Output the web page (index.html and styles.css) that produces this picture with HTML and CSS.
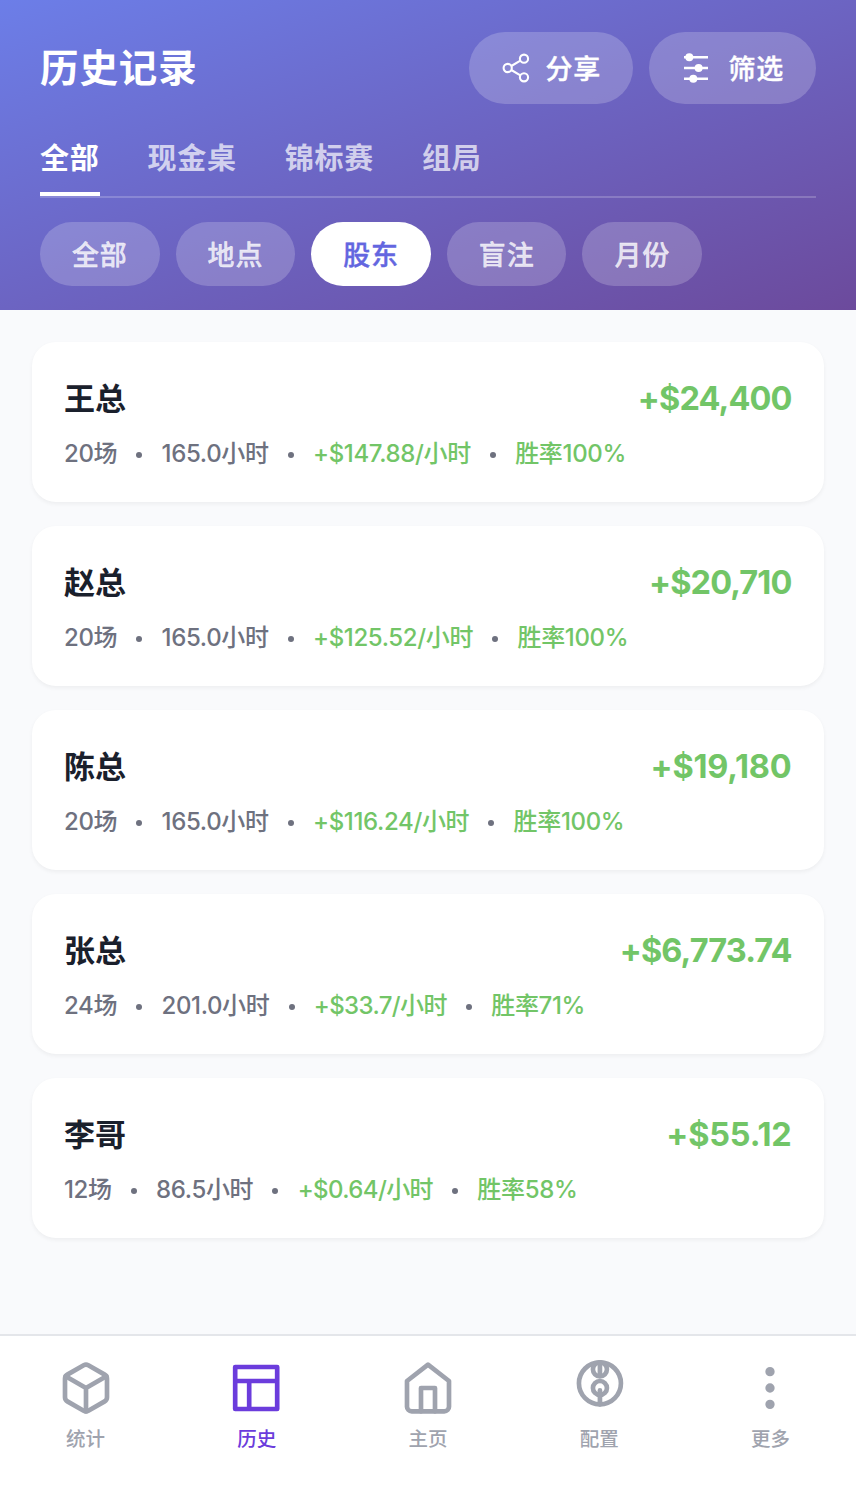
FILE: index.html
```
<!DOCTYPE html>
<html lang="zh-CN">
<head>
    <meta charset="UTF-8">
    <meta name="viewport" content="width=device-width, initial-scale=1.0">
    <title>历史记录</title>
    <link rel="stylesheet" href="styles.css">
</head>
<body>
    <header class="header">
        <div class="header__top">
            <h1 class="header__title">历史记录</h1>
            <div class="header__actions">
                <button class="action">
                    <svg class="action__icon action__icon--share" viewBox="0 0 32 32" fill="none" stroke="currentColor" stroke-width="2.1">
                        <circle cx="6.7" cy="16" r="4.1"/>
                        <circle cx="23" cy="6.7" r="4.1"/>
                        <circle cx="23" cy="25.3" r="4.1"/>
                        <path d="M10.3 14l9.1-5.3M10.3 18l9.1 5.3"/>
                    </svg>
                    <span>分享</span>
                </button>
                <button class="action">
                    <svg class="action__icon action__icon--filter" viewBox="0 0 32 32" fill="currentColor" stroke="currentColor" stroke-width="2.4">
                        <path d="M3 5.3h24M3 16h24M3 26.7h24"/>
                        <g stroke="none">
                            <circle cx="8.3" cy="5.3" r="4"/>
                            <circle cx="17.6" cy="16" r="4"/>
                            <circle cx="12.3" cy="26.7" r="4"/>
                        </g>
                    </svg>
                    <span>筛选</span>
                </button>
            </div>
        </div>
        <nav class="tabs">
            <a class="tab tab--active">全部</a>
            <a class="tab">现金桌</a>
            <a class="tab">锦标赛</a>
            <a class="tab">组局</a>
        </nav>
        <div class="chips">
            <button class="chip">全部</button>
            <button class="chip">地点</button>
            <button class="chip chip--active">股东</button>
            <button class="chip">盲注</button>
            <button class="chip">月份</button>
        </div>
    </header>

    <main class="list">
        <article class="card">
            <div class="card__row">
                <h2 class="card__name">王总</h2>
                <span class="card__amount">+$24,400</span>
            </div>
            <div class="card__meta">
                <span>20场</span><i class="dot"></i><span>165.0小时</span><i class="dot"></i><span class="win">+$147.88/小时</span><i class="dot"></i><span class="win">胜率100%</span>
            </div>
        </article>
        <article class="card">
            <div class="card__row">
                <h2 class="card__name">赵总</h2>
                <span class="card__amount">+$20,710</span>
            </div>
            <div class="card__meta">
                <span>20场</span><i class="dot"></i><span>165.0小时</span><i class="dot"></i><span class="win">+$125.52/小时</span><i class="dot"></i><span class="win">胜率100%</span>
            </div>
        </article>
        <article class="card">
            <div class="card__row">
                <h2 class="card__name">陈总</h2>
                <span class="card__amount card__amount--loose">+$19,180</span>
            </div>
            <div class="card__meta">
                <span>20场</span><i class="dot"></i><span>165.0小时</span><i class="dot"></i><span class="win">+$116.24/小时</span><i class="dot"></i><span class="win">胜率100%</span>
            </div>
        </article>
        <article class="card">
            <div class="card__row">
                <h2 class="card__name">张总</h2>
                <span class="card__amount">+$6,773.74</span>
            </div>
            <div class="card__meta">
                <span>24场</span><i class="dot"></i><span>201.0小时</span><i class="dot"></i><span class="win win--tight">+$33.7/小时</span><i class="dot"></i><span class="win">胜率71%</span>
            </div>
        </article>
        <article class="card">
            <div class="card__row">
                <h2 class="card__name">李哥</h2>
                <span class="card__amount card__amount--loose">+$55.12</span>
            </div>
            <div class="card__meta">
                <span>12场</span><i class="dot"></i><span>86.5小时</span><i class="dot"></i><span class="win win--tight">+$0.64/小时</span><i class="dot"></i><span class="win">胜率58%</span>
            </div>
        </article>
    </main>

    <nav class="tabbar">
        <a class="tabbar__item">
            <svg class="tabbar__icon" viewBox="0 0 24 24">
                <path d="M21 16V8a2 2 0 0 0-1-1.73l-7-4a2 2 0 0 0-2 0l-7 4A2 2 0 0 0 3 8v8a2 2 0 0 0 1 1.73l7 4a2 2 0 0 0 2 0l7-4A2 2 0 0 0 21 16z"/>
                <path d="M3.27 6.96L12 12.01l8.73-5.05M12 22.08V12"/>
            </svg>
            <span>统计</span>
        </a>
        <a class="tabbar__item tabbar__item--active">
            <svg class="tabbar__icon" viewBox="0.35 0 24 24">
                <path d="M3 3h18v18H3zM3 9h18M9 21V9"/>
            </svg>
            <span>历史</span>
        </a>
        <a class="tabbar__item">
            <svg class="tabbar__icon" viewBox="0 0 24 24">
                <path d="M3 9l9-7 9 7v11a2 2 0 0 1-2 2H5a2 2 0 0 1-2-2z"/>
                <path d="M9 22V12h6v10"/>
            </svg>
            <span>主页</span>
        </a>
        <a class="tabbar__item">
            <svg class="tabbar__icon" viewBox="0 0 24 24">
                <circle cx="12.4" cy="10" r="9"/>
                <circle cx="12.4" cy="12" r="3"/>
                <circle cx="12.4" cy="4" r="3"/>
                <path d="M12.4 1v5M12.4 13v6"/>
            </svg>
            <span>配置</span>
        </a>
        <a class="tabbar__item">
            <svg class="tabbar__icon" viewBox="0 0 24 24">
                <circle cx="12" cy="5" r="1"/>
                <circle cx="12" cy="12" r="1"/>
                <circle cx="12" cy="19" r="1"/>
            </svg>
            <span>更多</span>
        </a>
    </nav>
</body>
</html>
```
FILE: styles.css
```
* {
    box-sizing: border-box;
}

body {
    margin: 0;
    min-height: 100vh;
    display: flex;
    flex-direction: column;
    background: #f9fafc;
    color: #1a202c;
    font-family: Inter, "Noto Sans CJK SC", sans-serif;
    font-feature-settings: "calt" 0;
}

button {
    border: 0;
    font-family: inherit;
    cursor: pointer;
}

/* header */
.header {
    height: 310px;
    padding: 32px 40px 24px;
    background: linear-gradient(to bottom right, #6c7ee8, #6c4a9c);
    color: #fff;
}

.header__top {
    display: flex;
    justify-content: space-between;
    align-items: center;
    height: 72px;
}

.header__title {
    margin: 0;
    font-size: 38.5px;
    line-height: 48px;
    font-weight: 700;
    letter-spacing: 0.9px;
}

.header__actions {
    display: flex;
    gap: 16px;
}

.action {
    display: flex;
    align-items: center;
    gap: 12px;
    height: 72px;
    padding: 0 32px;
    border-radius: 36px;
    background: rgba(255, 255, 255, 0.2);
    color: #fff;
    font-size: 27px;
    font-weight: 500;
    letter-spacing: 0.75px;
    -webkit-text-stroke: 0.4px;
}

.action span {
    padding-bottom: 2px;
}

.action__icon {
    width: 32px;
    height: 32px;
}

.action__icon--share {
    margin-right: 0.5px;
}

.action__icon--filter {
    margin-right: 3.5px;
}

.tabs {
    display: flex;
    gap: 48px;
    height: 94px;
    padding-top: 32px;
    border-bottom: 2px solid rgba(255, 255, 255, 0.2);
}

.tab {
    height: 60px;
    border-bottom: 4px solid transparent;
    color: rgba(255, 255, 255, 0.7);
    font-size: 29px;
    line-height: 45px;
    font-weight: 700;
    letter-spacing: 0.75px;
}

.tab--active {
    border-color: #fff;
    color: #fff;
}

.chips {
    display: flex;
    gap: 16px;
    margin-top: 24px;
}

.chip {
    height: 64px;
    padding: 0 32px 2px;
    border-radius: 32px;
    background: rgba(255, 255, 255, 0.2);
    color: rgba(255, 255, 255, 0.8);
    font-size: 27px;
    font-weight: 500;
    letter-spacing: 0.8px;
    -webkit-text-stroke: 0.4px;
}

.chip--active {
    background: #fff;
    color: #6366e0;
}

/* player cards */
.list {
    flex: 1;
    display: flex;
    flex-direction: column;
    gap: 24px;
    padding: 32px;
}

.card {
    height: 160px;
    padding: 32px;
    border-radius: 24px;
    background: #fff;
    box-shadow: 0 2px 4px rgba(0, 0, 0, 0.05);
}

.card__row {
    display: flex;
    justify-content: space-between;
    align-items: center;
    height: 48px;
}

.card__name {
    margin: 0;
    padding-bottom: 3px;
    font-size: 31px;
    font-weight: 700;
}

.card__amount {
    margin-right: 0.5px;
    color: #72c567;
    font-size: 32.5px;
    font-weight: 700;
    letter-spacing: -0.9px;
}

.card__amount--loose {
    letter-spacing: -0.2px;
}

.card__meta {
    display: flex;
    align-items: center;
    height: 32px;
    margin-top: 16px;
    color: #6e717f;
    font-size: 24px;
    font-weight: 500;
    letter-spacing: -0.35px;
}

.card__meta span {
    padding-bottom: 6px;
}

.dot {
    width: 6px;
    height: 6px;
    margin: 2px 19.2px 0;
    border-radius: 50%;
    background: #6e717f;
}

.win {
    color: #72c567;
}

.win--tight {
    letter-spacing: -0.6px;
}

/* bottom tab bar */
.tabbar {
    display: flex;
    height: 168px;
    padding-top: 24px;
    border-top: 2px solid #e4e6ea;
    background: #fff;
}

.tabbar__item {
    flex: 1;
    display: flex;
    flex-direction: column;
    align-items: center;
    gap: 8px;
    color: #9fa3ae;
    font-size: 19.5px;
    line-height: 30px;
    font-weight: 500;
}

.tabbar__item--active {
    color: #6b3cdc;
}

.tabbar__icon {
    width: 56px;
    height: 56px;
    fill: none;
    stroke: currentColor;
    stroke-width: 2;
    stroke-linecap: round;
    stroke-linejoin: round;
}
```
